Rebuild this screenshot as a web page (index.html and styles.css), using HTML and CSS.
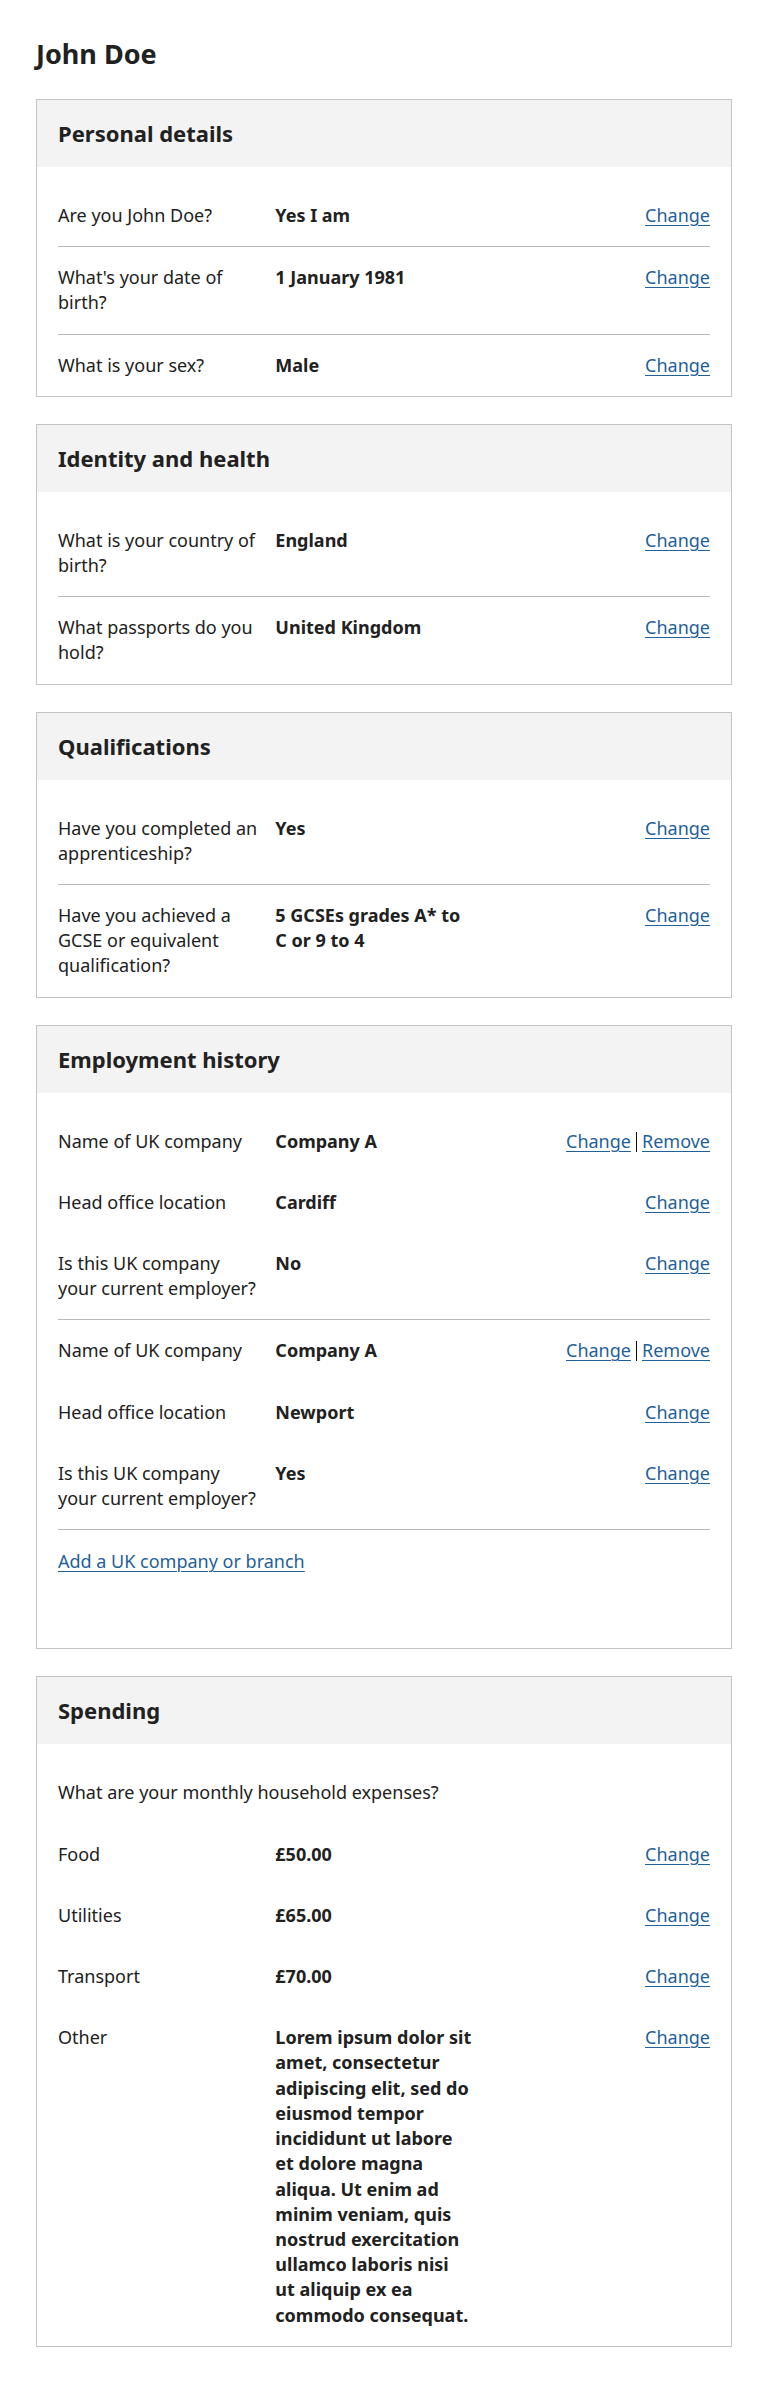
FILE: index.html
```html
<!DOCTYPE html>
<html lang="en">
<head>
<meta charset="utf-8">
<title>John Doe</title>
<link rel="stylesheet" href="styles.css">
</head>
<body>
<main class="page">
  <h1 class="title">John Doe</h1>

  <section class="card">
    <h2 class="card-title">Personal details</h2>
    <div class="card-body">
      <dl class="group">
        <div class="row">
          <dt class="key">Are you John Doe?</dt>
          <dd class="value">Yes I am</dd>
          <dd class="actions"><a class="link" href="#">Change</a></dd>
        </div>
        <div class="row">
          <dt class="key">What's your date of birth?</dt>
          <dd class="value">1 January 1981</dd>
          <dd class="actions"><a class="link" href="#">Change</a></dd>
        </div>
        <div class="row">
          <dt class="key">What is your sex?</dt>
          <dd class="value">Male</dd>
          <dd class="actions"><a class="link" href="#">Change</a></dd>
        </div>
      </dl>
    </div>
  </section>

  <section class="card">
    <h2 class="card-title">Identity and health</h2>
    <div class="card-body">
      <dl class="group">
        <div class="row">
          <dt class="key">What is your country of birth?</dt>
          <dd class="value">England</dd>
          <dd class="actions"><a class="link" href="#">Change</a></dd>
        </div>
        <div class="row">
          <dt class="key">What passports do you hold?</dt>
          <dd class="value">United Kingdom</dd>
          <dd class="actions"><a class="link" href="#">Change</a></dd>
        </div>
      </dl>
    </div>
  </section>

  <section class="card">
    <h2 class="card-title">Qualifications</h2>
    <div class="card-body">
      <dl class="group">
        <div class="row">
          <dt class="key">Have you completed an apprenticeship?</dt>
          <dd class="value">Yes</dd>
          <dd class="actions"><a class="link" href="#">Change</a></dd>
        </div>
        <div class="row">
          <dt class="key">Have you achieved a GCSE or equivalent qualification?</dt>
          <dd class="value">5 GCSEs grades A* to C or 9 to 4</dd>
          <dd class="actions"><a class="link" href="#">Change</a></dd>
        </div>
      </dl>
    </div>
  </section>

  <section class="card">
    <h2 class="card-title">Employment history</h2>
    <div class="card-body">
      <dl class="group group-ruled">
        <div class="row row-plain">
          <dt class="key">Name of UK company</dt>
          <dd class="value">Company A</dd>
          <dd class="actions actions-pair"><a class="link" href="#">Change</a><span class="sep"></span><a class="link" href="#">Remove</a></dd>
        </div>
        <div class="row row-plain">
          <dt class="key">Head office location</dt>
          <dd class="value">Cardiff</dd>
          <dd class="actions"><a class="link" href="#">Change</a></dd>
        </div>
        <div class="row row-plain">
          <dt class="key">Is this UK company your current employer?</dt>
          <dd class="value">No</dd>
          <dd class="actions"><a class="link" href="#">Change</a></dd>
        </div>
      </dl>
      <dl class="group group-ruled">
        <div class="row row-plain">
          <dt class="key">Name of UK company</dt>
          <dd class="value">Company A</dd>
          <dd class="actions actions-pair"><a class="link" href="#">Change</a><span class="sep"></span><a class="link" href="#">Remove</a></dd>
        </div>
        <div class="row row-plain">
          <dt class="key">Head office location</dt>
          <dd class="value">Newport</dd>
          <dd class="actions"><a class="link" href="#">Change</a></dd>
        </div>
        <div class="row row-plain">
          <dt class="key">Is this UK company your current employer?</dt>
          <dd class="value">Yes</dd>
          <dd class="actions"><a class="link" href="#">Change</a></dd>
        </div>
      </dl>
      <p class="add"><a class="link" href="#">Add a UK company or branch</a></p>
    </div>
  </section>

  <section class="card">
    <h2 class="card-title">Spending</h2>
    <div class="card-body">
      <p class="intro">What are your monthly household expenses?</p>
      <dl class="group">
        <div class="row row-plain">
          <dt class="key">Food</dt>
          <dd class="value">£50.00</dd>
          <dd class="actions"><a class="link" href="#">Change</a></dd>
        </div>
        <div class="row row-plain">
          <dt class="key">Utilities</dt>
          <dd class="value">£65.00</dd>
          <dd class="actions"><a class="link" href="#">Change</a></dd>
        </div>
        <div class="row row-plain">
          <dt class="key">Transport</dt>
          <dd class="value">£70.00</dd>
          <dd class="actions"><a class="link" href="#">Change</a></dd>
        </div>
        <div class="row row-plain">
          <dt class="key">Other</dt>
          <dd class="value">Lorem ipsum dolor sit amet, consectetur adipiscing elit, sed do eiusmod tempor incididunt ut labore et dolore magna aliqua. Ut enim ad minim veniam, quis nostrud exercitation ullamco laboris nisi ut aliquip ex ea commodo consequat.</dd>
          <dd class="actions"><a class="link" href="#">Change</a></dd>
        </div>
      </dl>
    </div>
  </section>
</main>
</body>
</html>
```

FILE: styles.css
```css
* {
  box-sizing: border-box;
}

html,
body {
  margin: 0;
  padding: 0;
  background: #ffffff;
}

body {
  font-family: "Noto Sans", "Open Sans", Arial, sans-serif;
  font-size: 18px;
  line-height: 25.2px;
  color: #212121;
}

.page {
  padding: 38px 36px 36px;
}

.title {
  margin: 0 0 29px;
  font-size: 27px;
  line-height: 32px;
  font-weight: 700;
}

.card {
  border: 1px solid #c3c4c5;
  margin-bottom: 27px;
}

.card:last-child {
  margin-bottom: 0;
}

.card-title {
  margin: 0;
  padding: 20px 21px;
  background: #f3f3f3;
  font-size: 22px;
  line-height: 27px;
  font-weight: 700;
}

.card-body {
  padding: 18px 21px 0;
}

.group {
  margin: 0;
}

.row {
  display: grid;
  grid-template-columns: repeat(3, 1fr);
  padding: 18px 0;
  border-bottom: 1px solid #b8babc;
}

.group > .row:last-child {
  border-bottom: 0;
}

.row-plain {
  border-bottom: 0;
}

.group-ruled {
  border-bottom: 1px solid #b8babc;
}

.key,
.value,
.actions {
  margin: 0;
}

.key {
  padding-right: 16px;
}

.value {
  padding-right: 20px;
  font-weight: 700;
}

.actions {
  display: flex;
  justify-content: flex-end;
  align-items: flex-start;
}

.link {
  color: #1f5f9a;
  text-decoration: underline;
  text-decoration-thickness: 1px;
  text-underline-offset: 3px;
}

.actions-pair {
  gap: 5px;
}

.sep {
  width: 1px;
  height: 20px;
  margin-top: 3px;
  background: #0b0c0c;
}

.add {
  margin: 0;
  padding: 19px 0 74px;
}

.intro {
  margin: 0;
  padding: 18px 0;
}
```
